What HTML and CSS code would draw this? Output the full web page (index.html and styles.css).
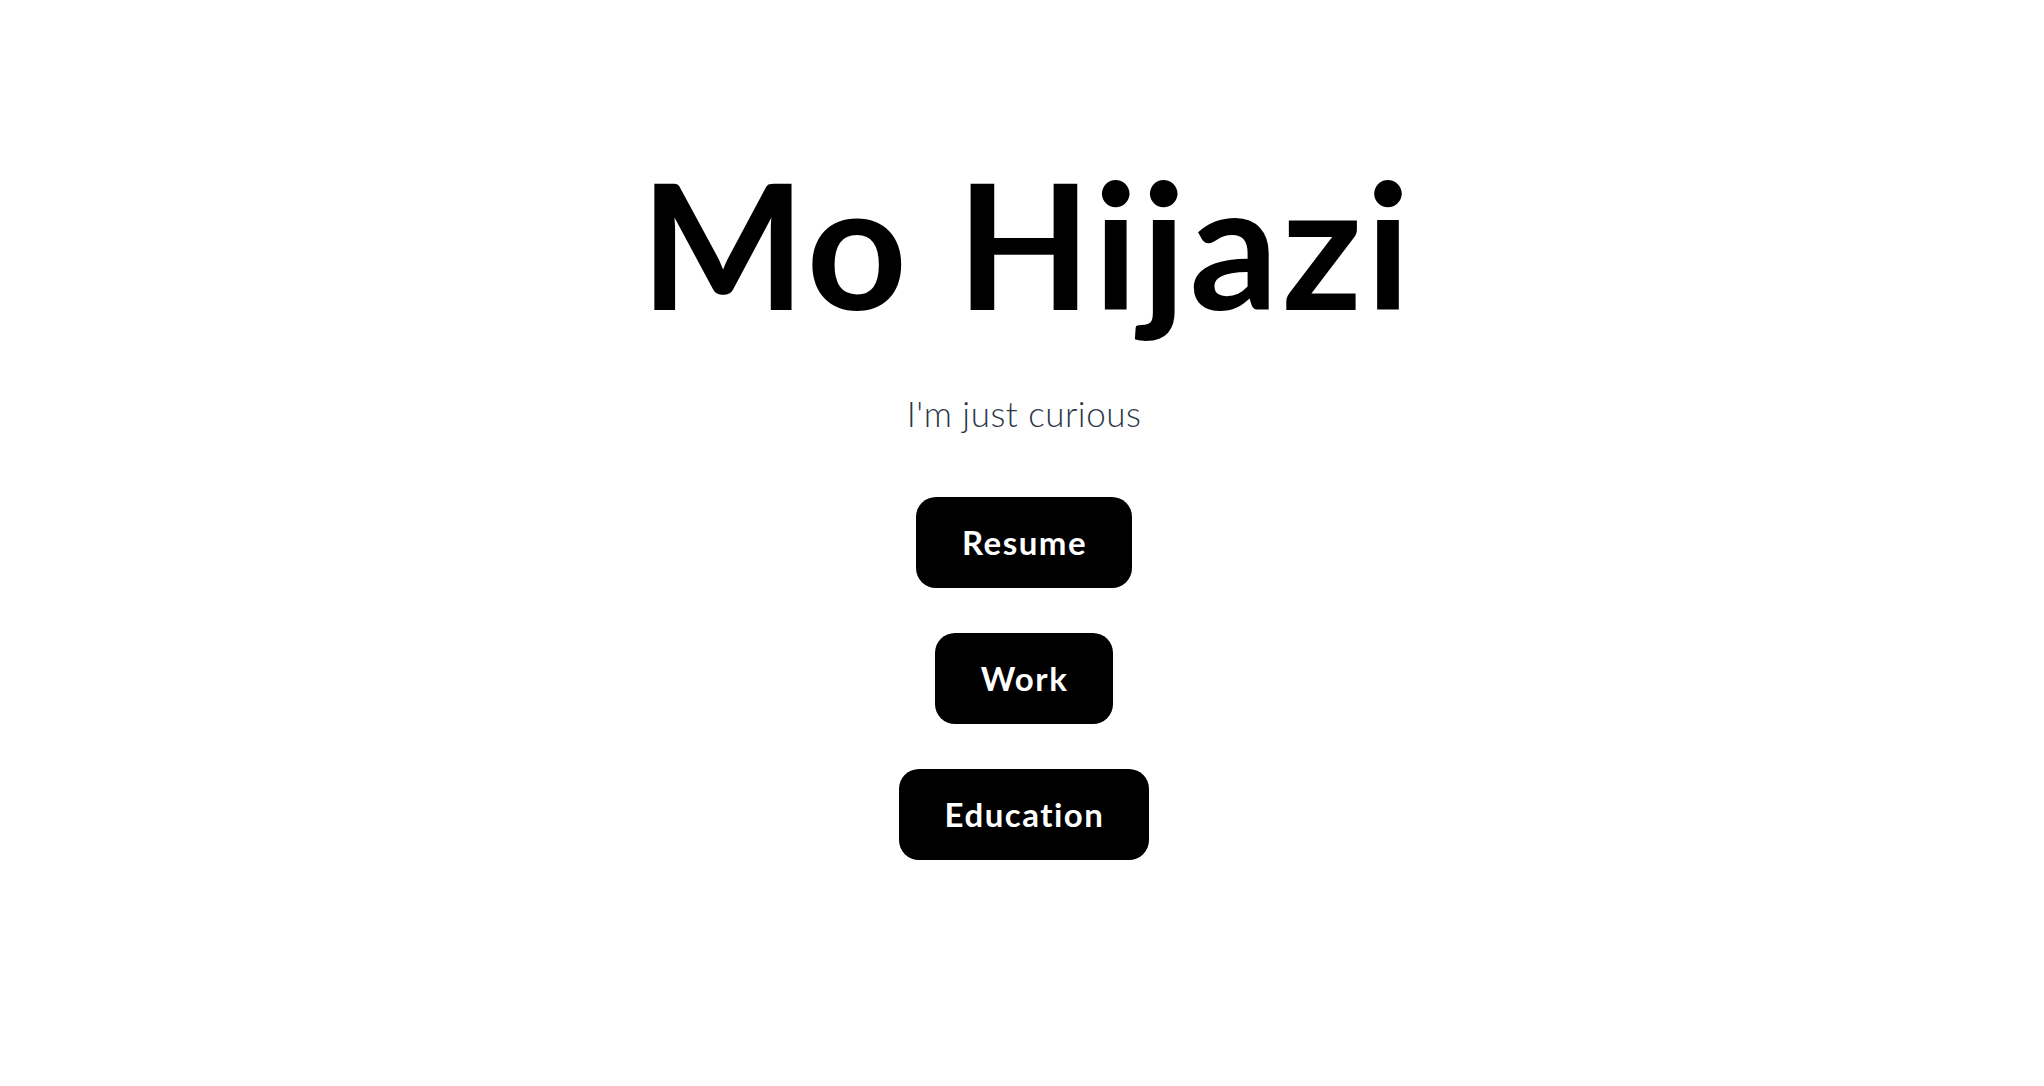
FILE: index.html
```html
<!DOCTYPE html>
<html lang="en">
<head>
<meta charset="utf-8">
<title>Mo Hijazi</title>
<link rel="stylesheet" href="styles.css">
</head>
<body>
<main class="hero">
  <h1 class="title">Mo Hijazi</h1>
  <p class="tagline">I'm just curious</p>
  <nav class="links">
    <a class="btn" href="#">Resume</a>
    <a class="btn" href="#">Work</a>
    <a class="btn" href="#">Education</a>
  </nav>
</main>
</body>
</html>
```

FILE: styles.css
```css
html, body {
  margin: 0;
  padding: 0;
  background: #ffffff;
}
body {
  font-family: Lato, "Noto Sans", sans-serif;
  color: #000;
}
.hero {
  display: flex;
  flex-direction: column;
  align-items: center;
  padding-top: 155px;
}
.title {
  margin: 0 0 0 10px;
  font-size: 175px;
  line-height: 1;
  font-weight: 700;
  letter-spacing: 3.5px;
  color: #000;
}
.tagline {
  margin: 66px 0 0 4px;
  font-size: 35px;
  line-height: 1;
  font-weight: 300;
  letter-spacing: 0.5px;
  color: #2d3748;
}
.links {
  display: flex;
  flex-direction: column;
  align-items: center;
  gap: 45px;
  margin-top: 66px;
  margin-left: 4px;
}
.btn {
  display: block;
  height: 91px;
  line-height: 91px;
  padding: 0 45px 0 46px;
  background: #000;
  color: #fff;
  border-radius: 20px;
  font-size: 33px;
  font-weight: 700;
  letter-spacing: 1.5px;
  text-decoration: none;
}
```
